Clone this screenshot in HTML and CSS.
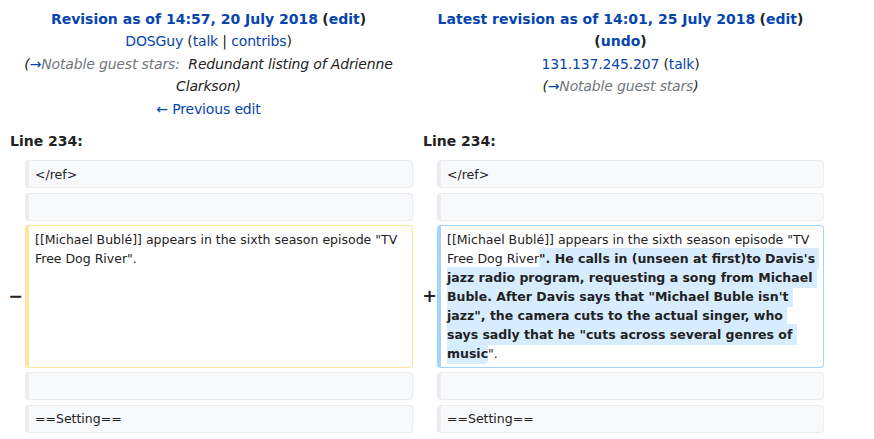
FILE: index.html
```html
<!DOCTYPE html>
<html lang="en">
<head>
<meta charset="utf-8">
<title>Diff</title>
<link rel="stylesheet" href="styles.css">
</head>
<body>
<div class="diff">
  <div class="title otitle">
    <div><strong><a href="#">Revision as of 14:57, 20 July 2018</a></strong> <strong class="paren">(<a href="#">edit</a>)</strong></div>
    <div><a href="#">DOSGuy</a> <span class="paren">(<a href="#">talk</a> | <a href="#">contribs</a>)</span></div>
    <div class="comment">(<a href="#" class="arrow">→</a><span class="autocomment">Notable guest stars:</span>&nbsp; Redundant listing of Adrienne Clarkson)</div>
    <div><a href="#">← Previous edit</a></div>
  </div>
  <div class="title ntitle">
    <div><strong><a href="#">Latest revision as of 14:01, 25 July 2018</a></strong> <strong class="paren">(<a href="#">edit</a>)</strong> <strong class="paren">(<a href="#">undo</a>)</strong></div>
    <div><a href="#">131.137.245.207</a> <span class="paren">(<a href="#">talk</a>)</span></div>
    <div class="comment">(<a href="#" class="arrow">→</a><span class="autocomment">Notable guest stars</span>)</div>
  </div>

  <div class="lineno lineno-left">Line 234:</div>
  <div class="lineno lineno-right">Line 234:</div>

  <div class="marker"></div>
  <div class="cell context"><div>&lt;/ref&gt;</div></div>
  <div class="marker"></div>
  <div class="cell context"><div>&lt;/ref&gt;</div></div>

  <div class="marker"></div>
  <div class="cell context"><div><br></div></div>
  <div class="marker"></div>
  <div class="cell context"><div><br></div></div>

  <div class="marker marker-del">−</div>
  <div class="cell deleted"><div>[[Michael Bublé]] appears in the sixth season episode "TV Free Dog River".</div></div>
  <div class="marker marker-add">+</div>
  <div class="cell added"><div>[[Michael Bublé]] appears in the sixth season episode "TV Free Dog River<ins class="change">". He calls in (unseen at first)to Davis's jazz radio program, requesting a song from Michael Buble. After Davis says that "Michael Buble isn't jazz", the camera cuts to the actual singer, who says sadly that he "cuts across several genres of music</ins>".</div></div>

  <div class="marker"></div>
  <div class="cell context"><div><br></div></div>
  <div class="marker"></div>
  <div class="cell context"><div><br></div></div>

  <div class="marker"></div>
  <div class="cell context"><div>==Setting==</div></div>
  <div class="marker"></div>
  <div class="cell context"><div>==Setting==</div></div>
</div>
</body>
</html>
```
FILE: styles.css
```css
html, body {
  background: #ffffff;
}
body {
  margin: 8px;
  font-family: "DejaVu Sans", sans-serif;
  font-size: 14px;
  line-height: 22.4px;
  color: #222222;
}
a {
  color: #0645ad;
  text-decoration: none;
}
.diff {
  display: grid;
  grid-template-columns: 17px 388px 24px 387px;
  row-gap: 4.6px;
}
.title {
  text-align: center;
  letter-spacing: -0.16px;
}
.title strong {
  letter-spacing: 0;
}
.otitle {
  grid-column: 1 / 3;
  padding-right: 4px;
}
.ntitle {
  grid-column: 3 / 5;
  padding-left: 4px;
}
.paren {
  color: #222222;
}
.comment {
  font-style: italic;
  color: #222222;
}
.autocomment {
  color: #72777d;
}
.arrow {
  font-style: normal;
}
.lineno {
  font-weight: bold;
  margin-top: 5.4px;
  margin-bottom: 3px;
}
.lineno-left {
  grid-column: 1 / 3;
  padding-left: 2px;
}
.lineno-right {
  grid-column: 3 / 5;
  padding-left: 10px;
}
.marker {
  align-self: center;
  font-size: 17.5px;
  font-weight: bold;
  text-align: right;
  line-height: 22px;
}
.marker-del {
  padding-right: 2px;
}
.marker-add {
  padding-right: 0;
}
.cell {
  border-style: solid;
  border-width: 1px 1px 1px 4px;
  border-radius: 4px;
  padding: 3.5px 0;
  font-size: 12.5px;
  line-height: 19.05px;
  white-space: pre-wrap;
  overflow-wrap: break-word;
  min-width: 0;
}
.cell > div {
  padding: 0 6px;
}
.context {
  background: #f8f9fa;
  border-color: #eaecf0;
}
.deleted {
  border-color: #ffe49c;
  background: #ffffff;
}
.added {
  border-color: #a3d3ff;
  background: #ffffff;
}
.change {
  font-weight: bold;
  text-decoration: none;
  background: #d8ecff;
  border-radius: 4px;
  padding: 3px 0;
}
```
